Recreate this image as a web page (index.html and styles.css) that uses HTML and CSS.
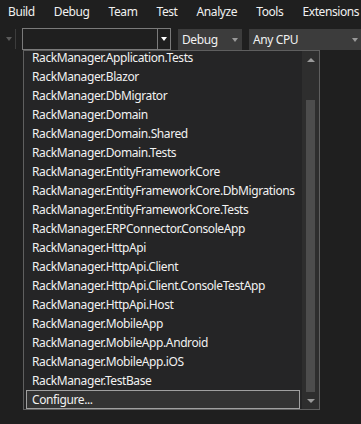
FILE: index.html
```html
<!DOCTYPE html>
<html lang="en">

<head>
    <meta charset="UTF-8" />
    <meta name="viewport" content="width=device-width, initial-scale=1.0" />
    <title>Startup project</title>
    <link rel="stylesheet" href="styles.css">
</head>

<body>
    <main>
        <nav class="menubar">
            <span class="menu_item">Build</span>
            <span class="menu_item">Debug</span>
            <span class="menu_item">Team</span>
            <span class="menu_item">Test</span>
            <span class="menu_item">Analyze</span>
            <span class="menu_item">Tools</span>
            <span class="menu_item">Extensions</span>
        </nav>
        <div class="toolbar">
            <div class="grip"><i class="tri tri_down tri_dim"></i></div>
            <div class="sep"></div>
            <div class="combo">
                <div class="combo_text"></div>
                <div class="combo_btn"><i class="tri tri_down tri_white"></i></div>
            </div>
            <div class="select select_config">
                <span>Debug</span>
                <i class="tri tri_down"></i>
            </div>
            <div class="select select_platform">
                <span>Any CPU</span>
                <i class="tri tri_down"></i>
            </div>
        </div>
        <div class="dropdown">
            <div class="list_wrap">
                <ul class="list">
                    <li class="first">RackManager.Application.Tests</li>
                    <li>RackManager.Blazor</li>
                    <li>RackManager.DbMigrator</li>
                    <li>RackManager.Domain</li>
                    <li>RackManager.Domain.Shared</li>
                    <li>RackManager.Domain.Tests</li>
                    <li>RackManager.EntityFrameworkCore</li>
                    <li>RackManager.EntityFrameworkCore.DbMigrations</li>
                    <li>RackManager.EntityFrameworkCore.Tests</li>
                    <li>RackManager.ERPConnector.ConsoleApp</li>
                    <li>RackManager.HttpApi</li>
                    <li>RackManager.HttpApi.Client</li>
                    <li>RackManager.HttpApi.Client.ConsoleTestApp</li>
                    <li>RackManager.HttpApi.Host</li>
                    <li>RackManager.MobileApp</li>
                    <li>RackManager.MobileApp.Android</li>
                    <li>RackManager.MobileApp.iOS</li>
                    <li>RackManager.TestBase</li>
                    <li class="active">Configure...</li>
                </ul>
            </div>
            <div class="scrollbar">
                <div class="arrow"><i class="tri tri_up"></i></div>
                <div class="track">
                    <div class="thumb"></div>
                </div>
                <div class="arrow"><i class="tri tri_down"></i></div>
            </div>
        </div>
    </main>
</body>

</html>
```

FILE: styles.css
```css
html,
body {
    height: 100%;
    padding: 0;
    margin: 0;
}

body {
    background: #1f1f1f;
    color: #f1f1f1;
    font-family: "Noto Sans", "Open Sans", sans-serif;
    font-size: 12px;
    letter-spacing: -0.4px;
    overflow: hidden;
}

ul,
li {
    list-style: none;
    padding: 0;
    margin: 0;
}

/* triangles */
.tri {
    display: block;
    width: 0;
    height: 0;
    border-left: 3.5px solid transparent;
    border-right: 3.5px solid transparent;
}

.tri_down {
    border-top: 4px solid #9a9a9a;
}

.tri_up {
    border-bottom: 4px solid #9a9a9a;
}

.tri_white {
    border-top-color: #ffffff;
}

.tri_dim {
    border-top-color: #5a5a5a;
}

/* menu */
.menubar {
    display: flex;
    height: 22px;
    align-items: center;
    padding-left: 8px;
    gap: 19px;
    white-space: nowrap;
}

/* toolbar */
.toolbar {
    display: flex;
    height: 22px;
    margin-top: 6px;
    align-items: stretch;
}

.grip {
    width: 12px;
    display: flex;
    align-items: center;
    justify-content: flex-end;
}

.sep {
    width: 1px;
    margin: 1px 0 1px 3px;
    background: #3c3c3c;
}

.combo {
    display: flex;
    width: 147px;
    margin-left: 6px;
    border: 1px solid #7a7a7a;
    background: #1f1f1f;
}

.combo_text {
    flex: 1;
}

.combo_btn {
    width: 12px;
    border-left: 1px solid #7a7a7a;
    display: flex;
    align-items: center;
    justify-content: center;
}

.select {
    display: flex;
    align-items: center;
    justify-content: space-between;
    background: #3c3c3c;
    padding: 0 4px 0 4px;
    margin-left: 7px;
    margin-top: 1px;
}

.select_config {
    width: 56px;
}

.select_platform {
    flex: 1;
    padding-right: 5px;
    margin-right: -2px;
}

/* dropdown list */
.dropdown {
    display: flex;
    width: 295px;
    height: 358px;
    margin-left: 23px;
    border: 1px solid #5f5f5f;
    background: #252526;
}

.list_wrap {
    flex: 1;
    padding: 0 2px;
}

.list li {
    height: 19px;
    line-height: 19px;
    padding-left: 6px;
    white-space: nowrap;
}

/* first row is scrolled up a little */
.list .first {
    height: 16px;
    line-height: 16px;
    padding-top: 0;
    position: relative;
    top: -1px;
}

.list .active {
    height: 17px;
    line-height: 17px;
    padding-left: 5px;
    border: 1px solid #a0a0a0;
    background: #333333;
}

.scrollbar {
    width: 17px;
    display: flex;
    flex-direction: column;
    background: #2e2e2e;
}

.arrow {
    height: 17px;
    display: flex;
    align-items: center;
    justify-content: center;
}

.arrow .tri {
    border-left-width: 4.5px;
    border-right-width: 4.5px;
}

.track {
    flex: 1;
    display: flex;
    flex-direction: column;
    justify-content: flex-end;
    padding: 0 4px;
}

.thumb {
    height: 292px;
    background: #4d4d4d;
}
```
